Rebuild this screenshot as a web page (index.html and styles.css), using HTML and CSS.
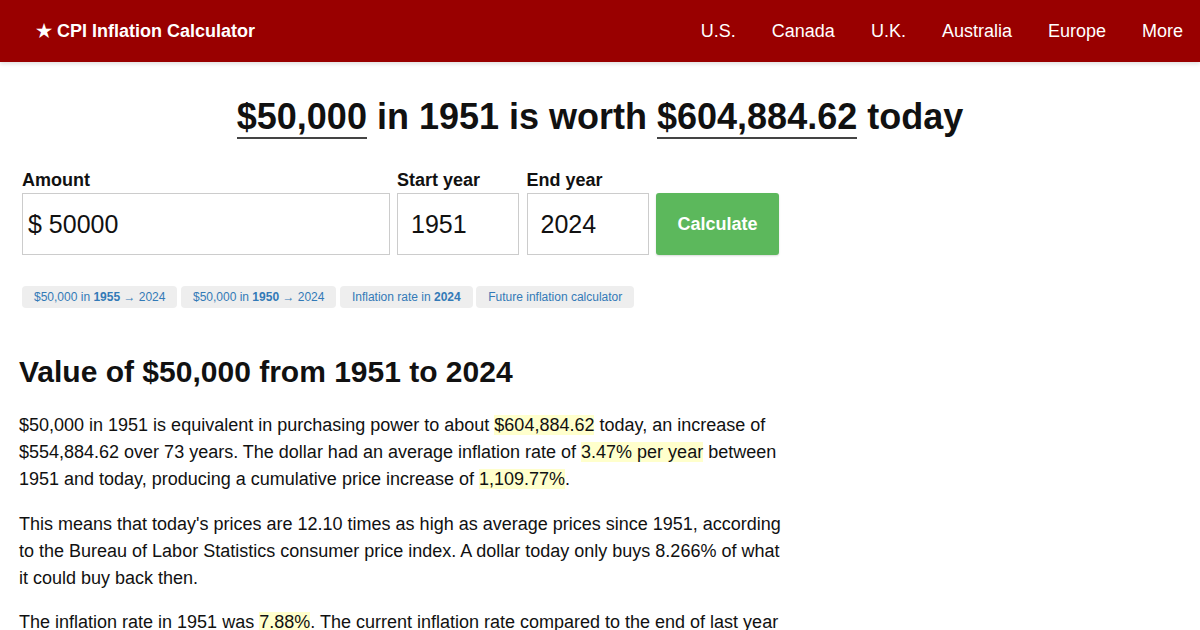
FILE: index.html
```html
<!DOCTYPE html>
<html>
<head>
<meta charset="utf-8">
<link rel="stylesheet" href="styles.css">
</head>
<body>
<header class="topbar">
  <a class="brand" href="#">★ CPI Inflation Calculator</a>
  <nav class="nav">
    <a href="#">U.S.</a>
    <a href="#">Canada</a>
    <a href="#">U.K.</a>
    <a href="#">Australia</a>
    <a href="#">Europe</a>
    <a href="#">More</a>
  </nav>
</header>
<h1 class="headline"><span class="amt">$50,000</span> in 1951 is worth <span class="amt">$604,884.62</span> today</h1>
<main class="main">
  <form class="calc">
    <div class="field field-amount">
      <label>Amount</label>
      <div class="box">$ 50000</div>
    </div>
    <div class="field field-year">
      <label>Start year</label>
      <div class="box year">1951</div>
    </div>
    <div class="field field-year">
      <label>End year</label>
      <div class="box year">2024</div>
    </div>
    <div class="field">
      <label>&nbsp;</label>
      <button type="button" class="btn">Calculate</button>
    </div>
  </form>
  <div class="chips">
    <a class="chip" href="#">$50,000 in <b>1955</b> → 2024</a>
    <a class="chip" href="#">$50,000 in <b>1950</b> → 2024</a>
    <a class="chip" href="#">Inflation rate in <b>2024</b></a>
    <a class="chip" href="#">Future inflation calculator</a>
  </div>
  <h2 class="section-title">Value of $50,000 from 1951 to 2024</h2>
  <p>$50,000 in 1951 is equivalent in purchasing power to about <span class="hl">$604,884.62</span> today, an increase of $554,884.62 over 73 years. The dollar had an average inflation rate of <span class="hl">3.47% per year</span> between 1951 and today, producing a cumulative price increase of <span class="hl">1,109.77%</span>.</p>
  <p>This means that today's prices are 12.10 times as high as average prices since 1951, according to the Bureau of Labor Statistics consumer price index. A dollar today only buys 8.266% of what it could buy back then.</p>
  <p>The inflation rate in 1951 was <span class="hl">7.88%</span>. The current inflation rate compared to the end of last year is now 2.90%.</p>
</main>
</body>
</html>
```

FILE: styles.css
```css
* { box-sizing: border-box; }
body {
  margin: 0;
  font-family: "Liberation Sans", Arial, sans-serif;
  color: #111;
  background: #fff;
}
.topbar {
  height: 62px;
  background: #990000;
  display: flex;
  align-items: center;
  justify-content: space-between;
  padding: 0 0 0 36px;
  box-shadow: 0 2px 4px rgba(0,0,0,0.12);
}
.brand {
  color: #fff;
  font-weight: bold;
  font-size: 18px;
  text-decoration: none;
}
.nav { display: flex; }
.nav a {
  color: #fff;
  text-decoration: none;
  font-size: 18px;
  padding: 0 18px;
}
.nav a:last-child { padding-right: 17px; }
.headline {
  text-align: center;
  font-size: 36px;
  font-weight: bold;
  margin: 33px 0 28px;
  line-height: 44px;
  color: #111;
}
.amt {
  border-bottom: 2px solid #444;
}
.main {
  padding-left: 19px;
  width: 790px;
}
.calc {
  display: flex;
  gap: 7.5px;
  padding-left: 3px;
}
.field { display: flex; flex-direction: column; }
.field label {
  font-weight: bold;
  font-size: 18px;
  line-height: 22px;
  height: 22px;
  margin-top: 2px;
  margin-bottom: 2px;
}
.field-amount .box { width: 367.5px; }
.box {
  height: 62px;
  border: 1px solid #ccc;
  font-size: 25px;
  display: flex;
  align-items: center;
  padding-left: 5px;
  color: #111;
}
.box.year { width: 122px; padding-left: 13px; }
.btn {
  width: 123px;
  height: 62px;
  background: #5cb85c;
  color: #fff;
  border: none;
  border-radius: 3px;
  font-family: "Liberation Sans", Arial, sans-serif;
  font-weight: bold;
  font-size: 18px;
  box-shadow: 0 1px 2px rgba(0,0,0,0.15);
}
.chips {
  display: flex;
  gap: 3.5px;
  margin-top: 31px;
  padding-left: 3px;
}
.chip {
  background: #eee;
  color: #337ab7;
  font-size: 12px;
  height: 22px;
  line-height: 22px;
  padding: 0 12px;
  border-radius: 4px;
  text-decoration: none;
}
.section-title {
  font-size: 30px;
  font-weight: bold;
  margin: 46px 0 22px;
  line-height: 36px;
}
p {
  font-size: 18px;
  line-height: 27px;
  margin: 0 0 17.5px;
}
.hl { background: #ffffcc; }
```
